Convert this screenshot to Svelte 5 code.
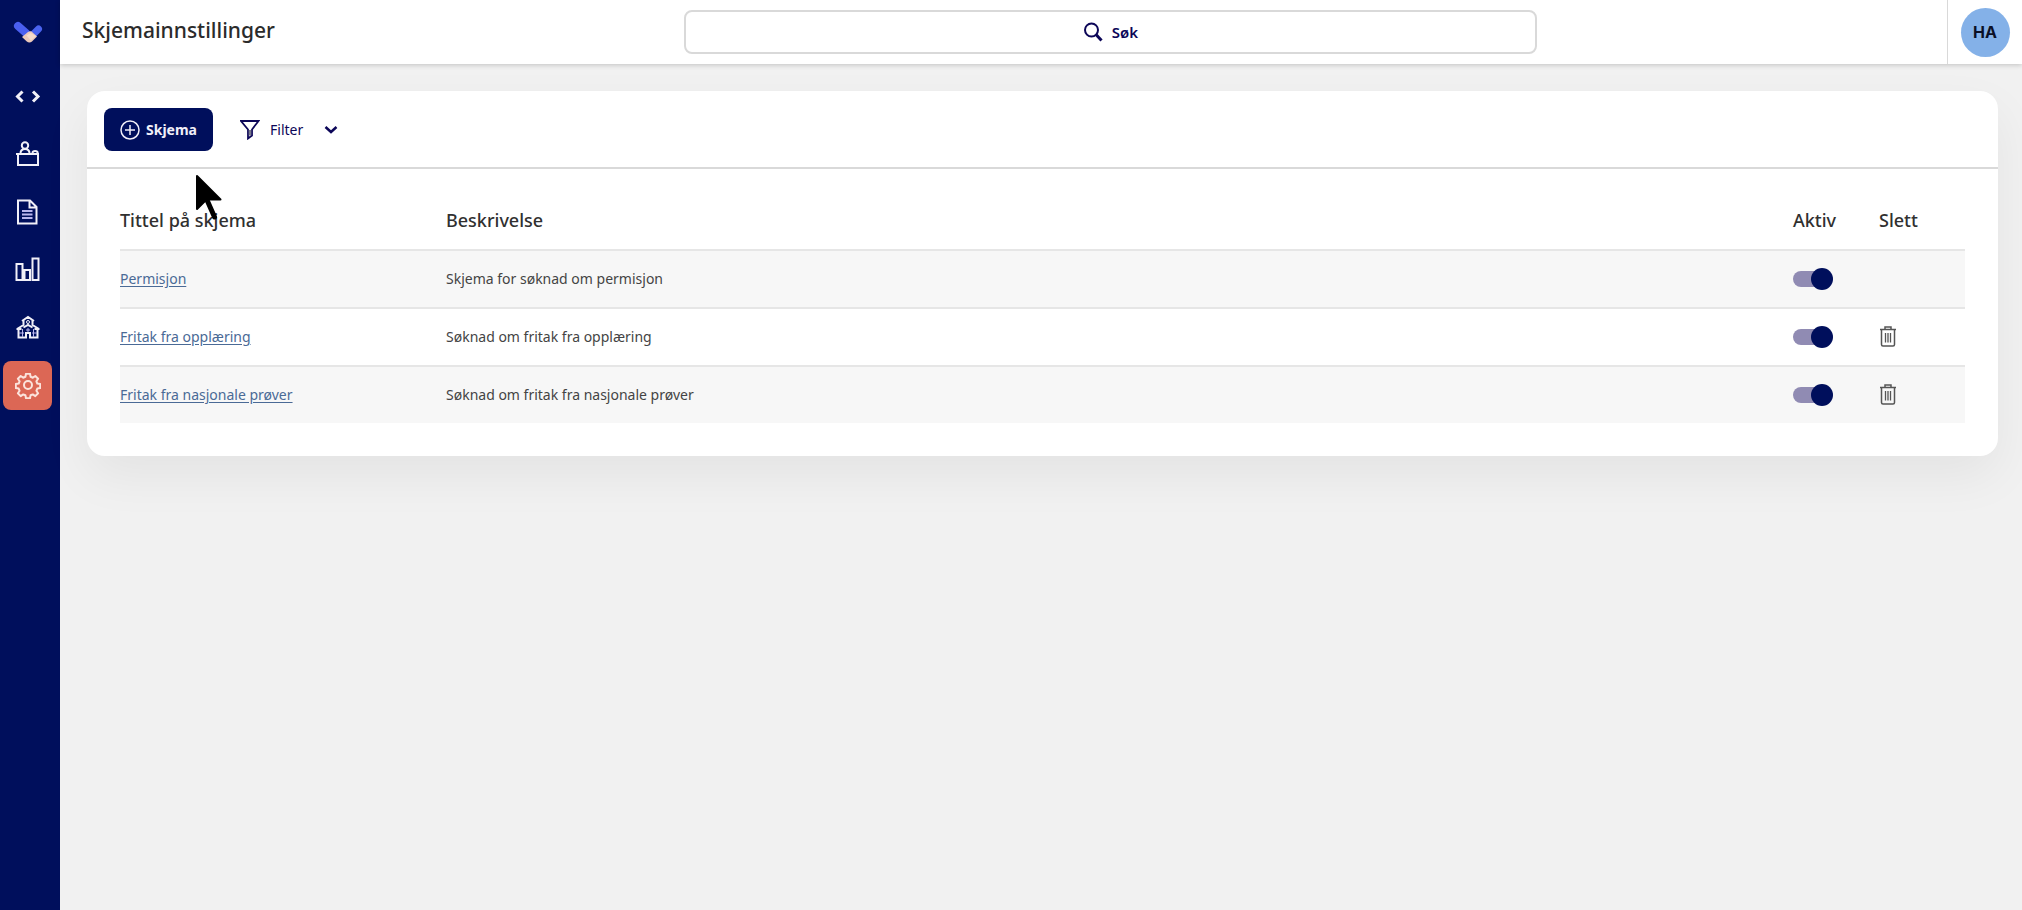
<script>
  let forms = $state([
    { title: 'Permisjon', description: 'Skjema for søknad om permisjon', active: true, removable: false },
    { title: 'Fritak fra opplæring', description: 'Søknad om fritak fra opplæring', active: true, removable: true },
    { title: 'Fritak fra nasjonale prøver', description: 'Søknad om fritak fra nasjonale prøver', active: true, removable: true }
  ]);
</script>

<div class="app">
  <aside class="sidebar">
    <a class="logo" href="#hjem" aria-label="Hjem">
      <svg width="30" height="24" viewBox="0 0 30 24">
        <g stroke-linecap="round" fill="none">
          <path d="M5 6l8 7" stroke="#4a5ff0" stroke-width="8" />
          <path d="M25.500 9l-5 5" stroke="#4a63ee" stroke-width="7" />
        </g>
        <path d="M9 17l6-5c1-.8 2.500-1 3.500-.5l5.500 5-5 5c-1.600 1.400-3.600 1.400-5.200 0z" fill="#ecc9ba" />
        <path d="M13.500 15.500l4-2.500 5.500 3-5 4.500z" fill="#f6dccb" />
      </svg>
    </a>
    <nav aria-label="Hovedmeny">
      <a href="#kode" aria-label="Kode">
        <svg width="26" height="26" viewBox="0 0 26 26"><path d="M7.500 8.500l-5 5 5 5M18 8.500l5 5-5 5" stroke-width="3" /></svg>
      </a>
      <a href="#resepsjon" aria-label="Resepsjon">
        <svg width="26" height="26" viewBox="0 0 26 26"><circle cx="10" cy="4.500" r="3.200" /><path d="M5.500 12.500c0-3.500 2-4.500 4.500-4.500s4.500 1 4.500 4.500M17.500 12c.2-2.600 5-2.600 5.200 0M1 13h23M3 13v11h20v-11" /></svg>
      </a>
      <a href="#dokumenter" aria-label="Dokumenter">
        <svg width="26" height="26" viewBox="0 0 26 26"><path d="M3 1.500h12l6.500 6.500v16.500H3zM14.500 1.500v7h7" /><path class="tint" d="M7 12h10.500M7 15.500h10.500M7 19h10.500" /></svg>
      </a>
      <a href="#statistikk" aria-label="Statistikk">
        <svg width="26" height="26" viewBox="0 0 26 26"><path d="M1.500 7h6v16h-6zM9.500 13h5.500v10h-5.500zM17.500 1.500h6v21.500h-6z" /></svg>
      </a>
      <a href="#skole" aria-label="Skole">
        <svg width="26" height="26" viewBox="0 0 26 26"><path d="M7 6l6-4 6 4M8.500 5.500v4.500L2 14M17.500 5.500v4.500L24 14M3.500 13.500v9H11V18h4v4.500h7.500v-9M1.500 14h5M19.500 14h5M8.500 12.500l4.500-2.500 4.500 2.500" /><circle cx="13" cy="7" r="1.500" stroke-width="1" /><path class="tint" stroke-width="1" d="M7.500 14v8M18.500 14v8M4 18h5M17 18h5M11 15h4M13 13v4" /></svg>
      </a>
      <a class="current" href="#innstillinger" aria-label="Innstillinger" aria-current="page">
        <svg width="26" height="26" viewBox="0 0 26 26"><circle cx="13" cy="12" r="4" /><path d="M11 .8h4l.6 3 2.200.9 2.500-1.700 2.800 2.800-1.700 2.500.9 2.200 2.900.5v4l-2.900.6-.9 2.200 1.700 2.500-2.800 2.800-2.500-1.700-2.200.9-.6 3h-4l-.6-3-2.200-.9-2.500 1.700-2.800-2.800 1.700-2.500-.9-2.200-2.900-.6v-4l2.900-.5.9-2.200-1.700-2.500L5.700 3l2.500 1.700 2.200-.9z" stroke-linejoin="round" /></svg>
      </a>
    </nav>
  </aside>

  <div class="page">
    <header>
      <h1>Skjemainnstillinger</h1>
      <button class="search" type="button">
        <svg width="20" height="20" viewBox="0 0 20 20" fill="none" stroke="currentColor"><circle cx="8.500" cy="8" r="6.500" stroke-width="2" /><path d="M13 12.500l5.500 6" stroke-width="3" /></svg>
        <span>Søk</span>
      </button>
      <div class="account"><button class="avatar" type="button">HA</button></div>
    </header>

    <main>
      <section class="card">
        <div class="toolbar">
          <button class="add" type="button">
            <svg width="20" height="20" viewBox="0 0 20 20" fill="none" stroke="currentColor" stroke-width="1.500"><circle cx="10" cy="10" r="9" /><path d="M10 5v10M5 10h10" /></svg>
            <span>Skjema</span>
          </button>
          <button class="filter" type="button">
            <svg width="20" height="20" viewBox="0 0 20 20" fill="none" stroke="currentColor" stroke-width="1.800"><path d="M1 1h17.500l-6.500 8.500v6l-4 3v-9z" /><path d="M10 10v5.500" stroke="#77778a" stroke-width="2.500" /></svg>
            <span>Filter</span>
            <svg class="chevron" width="14" height="10" viewBox="0 0 14 10" fill="none" stroke="currentColor" stroke-width="2.500"><path d="M1.500 2l5.500 5 5.500-5" /></svg>
          </button>
        </div>

        <div class="table-wrap">
          <table>
            <thead>
              <tr>
                <th class="title" scope="col">Tittel på skjema</th>
                <th scope="col">Beskrivelse</th>
                <th class="narrow" scope="col">Aktiv</th>
                <th class="narrow" scope="col">Slett</th>
              </tr>
            </thead>
            <tbody>
              {#each forms as form}
                <tr>
                  <td><a href="#skjema">{form.title}</a></td>
                  <td>{form.description}</td>
                  <td><input type="checkbox" role="switch" aria-label={`Aktiv: ${form.title}`} bind:checked={form.active} /></td>
                  <td>
                    {#if form.removable}
                      <button class="delete" type="button" aria-label={`Slett ${form.title}`}>
                        <svg width="18" height="22" viewBox="0 0 18 22" fill="none" stroke="currentColor" stroke-width="1.500"><path d="M1 3.500h16M6 3.500V1h6v2.500M2.500 3.500v15c0 1 .5 1.500 1.500 1.500h10c1 0 1.500-.5 1.500-1.500v-15" /><path d="M6.500 7v9.500M9 7v9.500M11.500 7v9.500" stroke-width="1.300" /></svg>
                      </button>
                    {/if}
                  </td>
                </tr>
              {/each}
            </tbody>
          </table>
        </div>
      </section>
    </main>
  </div>

  <svg class="cursor" width="28" height="48" viewBox="0 0 28 48" aria-hidden="true">
    <path d="M12 26l7.500 17" stroke="#000" stroke-width="5" stroke-linecap="round" />
    <path d="M2 2v33l9.500-9.500h14z" stroke="#000" stroke-width="2" stroke-linejoin="round" />
  </svg>
</div>

<style>
  :global(body) {
    background: #f1f1f1;
  }

  .app {
    display: flex;
    position: relative;
    min-height: 100vh;
    color: #333;
    font: 14px/20px "Noto Sans", sans-serif;
  }

  button {
    padding: 0;
    border: 0;
    background: none;
    color: #0c0658;
    font: inherit;
    cursor: pointer;
  }

  svg {
    display: block;
    flex: none;
  }

  .sidebar {
    box-sizing: border-box;
    flex: none;
    width: 60px;
    padding: 20px 8px 0 3px;
    background: #000f5c;
  }

  .logo {
    display: flex;
    justify-content: center;
    height: 51px;
  }

  nav {
    display: grid;
    gap: 9px;
  }

  nav a {
    display: grid;
    place-items: center;
    height: 49px;
    border-radius: 8px;
  }

  nav svg {
    fill: none;
    stroke: #f1f0f8;
    stroke-width: 2;
  }

  .tint {
    stroke: #b9b5ee;
  }

  .current {
    background: #dc6755;
  }

  .current svg {
    stroke: #fbe3dc;
  }

  .page {
    flex: 1;
    min-width: 0;
  }

  header {
    display: grid;
    grid-template-columns: 624fr 853fr 410fr 75px;
    align-items: center;
    height: 64px;
    background: #fff;
    box-shadow: 0 1px 5px rgb(0 0 0 / 20%);
  }

  h1 {
    margin: 0 0 4px;
    padding-left: 22px;
    color: #2b2b2b;
    font-size: 21px;
    font-weight: 500;
    line-height: 28px;
  }

  .search {
    display: flex;
    justify-content: center;
    align-items: center;
    gap: 9px;
    height: 44px;
    border: 2px solid #d9d9d9;
    border-radius: 8px;
    font-size: 15px;
    font-weight: 600;
  }

  .account {
    display: grid;
    grid-column: 4;
    place-items: center;
    height: 64px;
    border-left: 1px solid #d9d9d9;
  }

  .avatar {
    width: 49px;
    height: 49px;
    border-radius: 50%;
    background: #84b1e8;
    color: #0b1026;
    font: 700 16px/20px Inter, sans-serif;
  }

  main {
    padding: 27px 24px 32px 27px;
  }

  .card {
    border-radius: 18px;
    background: #fff;
    box-shadow: 0 20px 50px rgb(0 0 0 / 6%);
  }

  .toolbar {
    display: flex;
    align-items: center;
    gap: 27px;
    padding: 17px 17px 16px;
    border-bottom: 2px solid #d9d9d9;
  }

  .add {
    display: flex;
    align-items: center;
    justify-content: center;
    gap: 6px;
    width: 109px;
    height: 43px;
    border-radius: 8px;
    background: #000f5c;
    color: #f1eff8;
    font-weight: 700;
  }

  .filter {
    display: flex;
    align-items: center;
    gap: 10px;
    height: 43px;
  }

  .chevron {
    margin-left: 11px;
  }

  .table-wrap {
    padding: 21px 33px 33px;
  }

  table {
    width: 100%;
    border-collapse: collapse;
    table-layout: fixed;
  }

  th,
  td {
    padding: 0;
    text-align: left;
  }

  th {
    height: 59px;
    color: #303030;
    font-size: 18px;
    font-weight: 500;
  }

  .title {
    width: 326px;
  }

  .narrow {
    width: 86px;
  }

  td {
    height: 56px;
    border-top: 2px solid #e6e6e6;
    color: #444;
  }

  tbody tr:nth-child(odd) {
    background: #f7f7f7;
  }

  td a {
    color: #4a6a96;
    text-underline-offset: 2px;
  }

  input {
    display: block;
    appearance: none;
    position: relative;
    width: 40px;
    height: 22px;
    margin: 0;
    cursor: pointer;
  }

  input::before {
    content: "";
    position: absolute;
    inset: 3px 4px 3px 0;
    border-radius: 8px;
    background: #c9c9d2;
  }

  input::after {
    content: "";
    position: absolute;
    top: 0;
    left: 0;
    width: 22px;
    height: 22px;
    border-radius: 50%;
    background: #777;
  }

  input:checked::before {
    background: #908bb3;
  }

  input:checked::after {
    left: 18px;
    background: #000f5c;
  }

  .delete {
    display: block;
    color: #555;
  }

  .cursor {
    position: absolute;
    top: 174px;
    left: 195px;
    pointer-events: none;
  }
</style>
